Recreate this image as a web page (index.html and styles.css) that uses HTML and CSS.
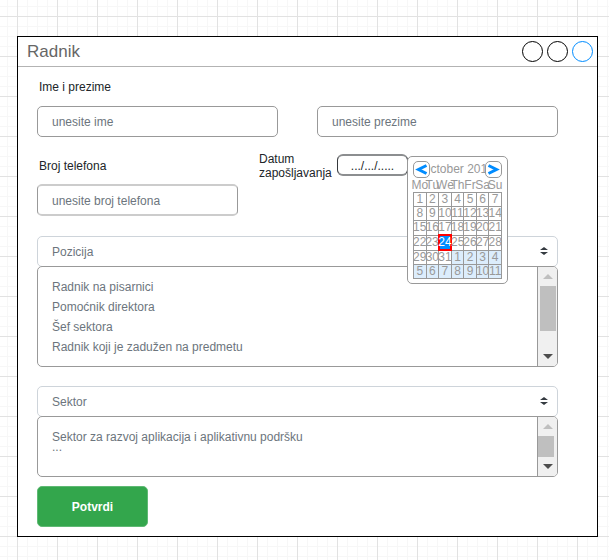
FILE: index.html
```html
<!DOCTYPE html>
<html lang="sr">
<head>
<meta charset="utf-8">
<meta name="viewport" content="width=device-width, initial-scale=1">
<title>Radnik</title>
<link rel="stylesheet" href="styles.css">
</head>
<body>
<main class="window">
  <header class="titlebar">
    <h1>Radnik</h1>
    <div class="controls">
      <button type="button" aria-label="Minimize"></button>
      <button type="button" aria-label="Maximize"></button>
      <button type="button" class="accent" aria-label="Close"></button>
    </div>
  </header>
  <form class="form">
    <label class="label" for="ime">Ime i prezime</label>
    <div class="names">
      <input class="field" id="ime" type="text" placeholder="unesite ime">
      <input class="field" id="prezime" type="text" placeholder="unesite prezime" aria-label="Prezime">
    </div>

    <div class="contact">
      <div class="phone">
        <label class="label" for="telefon">Broj telefona</label>
        <input class="field soft" id="telefon" type="text" placeholder="unesite broj telefona">
      </div>
      <div class="date">
        <label class="date-label" for="datum">Datum zapošljavanja</label>
        <div class="date-box">
          <input class="date-field" id="datum" type="text" placeholder=".../.../.....">
          <div class="calendar">
            <div class="calendar-head">
              <button type="button" aria-label="Previous month"><svg viewBox="0 0 15 15"><path d="M12.500 3.500L4.500 7.500L12.500 11.500"/></svg></button>
              <span>October 2018</span>
              <button type="button" aria-label="Next month"><svg viewBox="0 0 15 15"><path d="M2.500 3.500L10.500 7.500L2.500 11.500"/></svg></button>
            </div>
            <table>
              <thead>
                <tr><th><span>Mo</span></th><th><span>Tu</span></th><th><span>We</span></th><th><span>Th</span></th><th><span>Fr</span></th><th><span>Sa</span></th><th><span>Su</span></th></tr>
              </thead>
              <tbody>
                <tr><td><span>1</span></td><td><span>2</span></td><td><span>3</span></td><td><span>4</span></td><td><span>5</span></td><td><span>6</span></td><td><span>7</span></td></tr>
                <tr><td><span>8</span></td><td><span>9</span></td><td><span>10</span></td><td><span>11</span></td><td><span>12</span></td><td><span>13</span></td><td><span>14</span></td></tr>
                <tr><td><span>15</span></td><td><span>16</span></td><td><span>17</span></td><td><span>18</span></td><td><span>19</span></td><td><span>20</span></td><td><span>21</span></td></tr>
                <tr><td><span>22</span></td><td><span>23</span></td><td class="selected"><span>24</span></td><td><span>25</span></td><td><span>26</span></td><td><span>27</span></td><td><span>28</span></td></tr>
                <tr><td><span>29</span></td><td><span>30</span></td><td><span>31</span></td><td class="next"><span>1</span></td><td class="next"><span>2</span></td><td class="next"><span>3</span></td><td class="next"><span>4</span></td></tr>
                <tr><td class="next"><span>5</span></td><td class="next"><span>6</span></td><td class="next"><span>7</span></td><td class="next"><span>8</span></td><td class="next"><span>9</span></td><td class="next"><span>10</span></td><td class="next"><span>11</span></td></tr>
              </tbody>
            </table>
          </div>
        </div>
      </div>
    </div>

    <div class="picker">
      <div class="dropdown">
        <select aria-label="Pozicija"><option>Pozicija</option></select>
        <svg class="arrows" viewBox="0 0 8 8"><path d="M0 3L4 0L8 3zM0 5L4 8L8 5z"/></svg>
      </div>
      <div class="list">
        <select size="4" aria-label="Lista pozicija">
          <option>Radnik na pisarnici</option>
          <option>Pomoćnik direktora</option>
          <option>Šef sektora</option>
          <option>Radnik koji je zadužen na predmetu</option>
        </select>
        <div class="scrollbar">
          <svg class="up" viewBox="0 0 10 5"><path d="M0 5L5 0L10 5z"/></svg>
          <div class="thumb"></div>
          <svg class="down" viewBox="0 0 10 5"><path d="M0 0L5 5L10 0z"/></svg>
        </div>
      </div>
    </div>

    <div class="picker">
      <div class="dropdown">
        <select aria-label="Sektor"><option>Sektor</option></select>
        <svg class="arrows" viewBox="0 0 8 8"><path d="M0 3L4 0L8 3zM0 5L4 8L8 5z"/></svg>
      </div>
      <div class="list short">
        <select size="2" aria-label="Lista sektora">
          <option>Sektor za razvoj aplikacija i aplikativnu podršku</option>
          <option class="more">...</option>
        </select>
        <div class="scrollbar">
          <svg class="up" viewBox="0 0 10 5"><path d="M0 5L5 0L10 5z"/></svg>
          <div class="thumb"></div>
          <svg class="down" viewBox="0 0 10 5"><path d="M0 0L5 5L10 0z"/></svg>
        </div>
      </div>
    </div>

    <button class="submit" type="submit">Potvrdi</button>
  </form>
</main>
</body>
</html>
```
FILE: styles.css
```css
* {
  box-sizing: border-box;
}

body {
  margin: 0;
  padding: 36px 11px 23px 17px;
  font: 12px/14px "Liberation Sans", Arial, sans-serif;
  color: #212529;
  background-color: #fff;
  background-image:
    linear-gradient(to right, #e2e2e2 1px, transparent 1px),
    linear-gradient(to bottom, #e2e2e2 1px, transparent 1px),
    linear-gradient(to right, #f7f7f7 1px, transparent 1px),
    linear-gradient(to bottom, #f7f7f7 1px, transparent 1px);
  background-size: 40px 40px, 40px 40px, 10px 10px, 10px 10px;
  background-position: 17px 16px, 17px 16px, 7px 6px, 7px 6px;
}

input,
select,
button {
  margin: 0;
  font: inherit;
}

.window {
  background: #fff;
  border: 1px solid #000;
}

.titlebar {
  display: flex;
  align-items: center;
  justify-content: space-between;
  height: 30px;
  padding: 0 4px 0 9px;
  border-bottom: 1px solid #b3b3b3;
}

.titlebar h1 {
  margin: 0;
  font-size: 17px;
  line-height: 20px;
  font-weight: normal;
  color: #666;
}

.controls {
  display: flex;
  gap: 4px;
}

.controls button {
  width: 21px;
  height: 21px;
  padding: 0;
  background: #fff;
  border: 1px solid #000;
  border-radius: 50%;
}

.controls .accent {
  border-color: #008cff;
}

.form {
  padding: 13px 39px 9px 19px;
}

.label {
  display: block;
  padding-left: 2px;
  margin-bottom: 12px;
}

.names {
  display: grid;
  grid-template-columns: 1fr 1fr;
  gap: 39px;
  margin-bottom: 15px;
}

.field {
  display: block;
  width: 100%;
  height: 31px;
  padding: 0 14px;
  color: #6c757d;
  background: #fff;
  border: 1px solid #999;
  border-radius: 5px;
}

::placeholder {
  color: #6c757d;
  opacity: 1;
}

.soft {
  height: 32px;
  padding-top: 2px;
  border-top: 2px solid #ccc;
  border-bottom: 2px solid #ccc;
}

.contact {
  display: grid;
  grid-template-columns: 201px 1fr;
  gap: 21px;
  margin-bottom: 20px;
}

.phone {
  padding-top: 7px;
}

.phone .label {
  margin-bottom: 11px;
}

.date {
  display: flex;
  align-items: flex-start;
}

.date-label {
  width: 78px;
}

.date-box {
  position: relative;
  padding-top: 2px;
}

.date-field {
  display: block;
  width: 71px;
  height: 22px;
  padding: 2px 0 0;
  text-align: center;
  background: #fff;
  border: 1px solid #36393d;
  border-top: 2px solid #8c8e90;
  border-bottom: 2px solid #8c8e90;
  border-radius: 6px;
}

.date-field::placeholder {
  color: #212529;
}

.calendar {
  position: absolute;
  top: 4px;
  left: 70px;
  z-index: 1;
  width: 101px;
  padding: 4px 5px;
  color: #999;
  background: #fff;
  border: 1px solid #999;
  border-radius: 5px;
}

.calendar-head {
  display: flex;
  justify-content: space-between;
  height: 17px;
}

.calendar-head span {
  flex: 1;
  display: flex;
  justify-content: center;
  min-width: 0;
  line-height: 17px;
  white-space: nowrap;
}

.calendar-head button {
  position: relative;
  flex: none;
  width: 17px;
  height: 17px;
  padding: 0;
  background: #fff;
  border: 1px solid #999;
  border-radius: 5px;
}

.calendar-head svg {
  display: block;
  width: 15px;
  height: 15px;
  fill: none;
  stroke: #008cff;
  stroke-width: 3;
}

.calendar table {
  table-layout: fixed;
  width: 100%;
  border-collapse: collapse;
}

.calendar th,
.calendar td {
  padding: 0;
  font-weight: normal;
}

.calendar th {
  height: 14px;
}

.calendar td {
  height: 14px;
  line-height: 13px;
  border: 1px solid #999;
}

.calendar th span,
.calendar td span {
  display: flex;
  justify-content: center;
}

.calendar td span {
  height: 13px;
}

.calendar .next {
  background: #dcedfc;
}

.calendar .selected {
  color: #fff;
  background: #008cff;
  border: 2px solid #f00;
}

.picker {
  margin-bottom: 19px;
}

.picker + .picker {
  margin-bottom: 9px;
}

.dropdown {
  position: relative;
}

.dropdown select {
  display: block;
  width: 100%;
  height: 31px;
  padding: 0 14px;
  appearance: none;
  color: #6c757d;
  background: #fff;
  border: 1px solid #ced4da;
  border-radius: 5px;
}

.arrows {
  position: absolute;
  top: 11px;
  right: 10px;
  width: 8px;
  height: 8px;
  fill: #343a40;
  pointer-events: none;
}

.list {
  position: relative;
  display: flex;
  height: 101px;
  margin-top: -1px;
  overflow: hidden;
  background: #fff;
  border: 1px solid #999;
  border-radius: 5px;
}

.list select {
  flex: 1;
  min-width: 0;
  padding: 13px 14px 0;
  appearance: none;
  overflow: hidden;
  color: #6c757d;
  background: none;
  border: 0;
}

.list option {
  height: 20px;
  min-height: 0;
  padding: 0;
  line-height: 20px;
}

.list .more {
  margin-top: -10px;
}

.scrollbar {
  display: flex;
  flex-direction: column;
  align-items: center;
  width: 20px;
  padding: 7px 0;
  background: #f0f0f0;
  border-left: 1px solid #999;
}

.scrollbar svg {
  width: 10px;
  height: 5px;
}

.up {
  fill: #bfbfbf;
}

.down {
  margin-top: auto;
  fill: #4d4d4d;
}

.thumb {
  width: 16px;
  height: 45px;
  margin-top: 7px;
  background: #bfbfbf;
}

.short .thumb {
  align-self: flex-start;
  height: 21px;
}

.short {
  height: 61px;
}

.submit {
  display: block;
  width: 111px;
  height: 41px;
  padding: 0;
  font-weight: bold;
  color: #fff;
  background: #33a64c;
  border: 1px solid #5fb974;
  border-radius: 5px;
}
```
